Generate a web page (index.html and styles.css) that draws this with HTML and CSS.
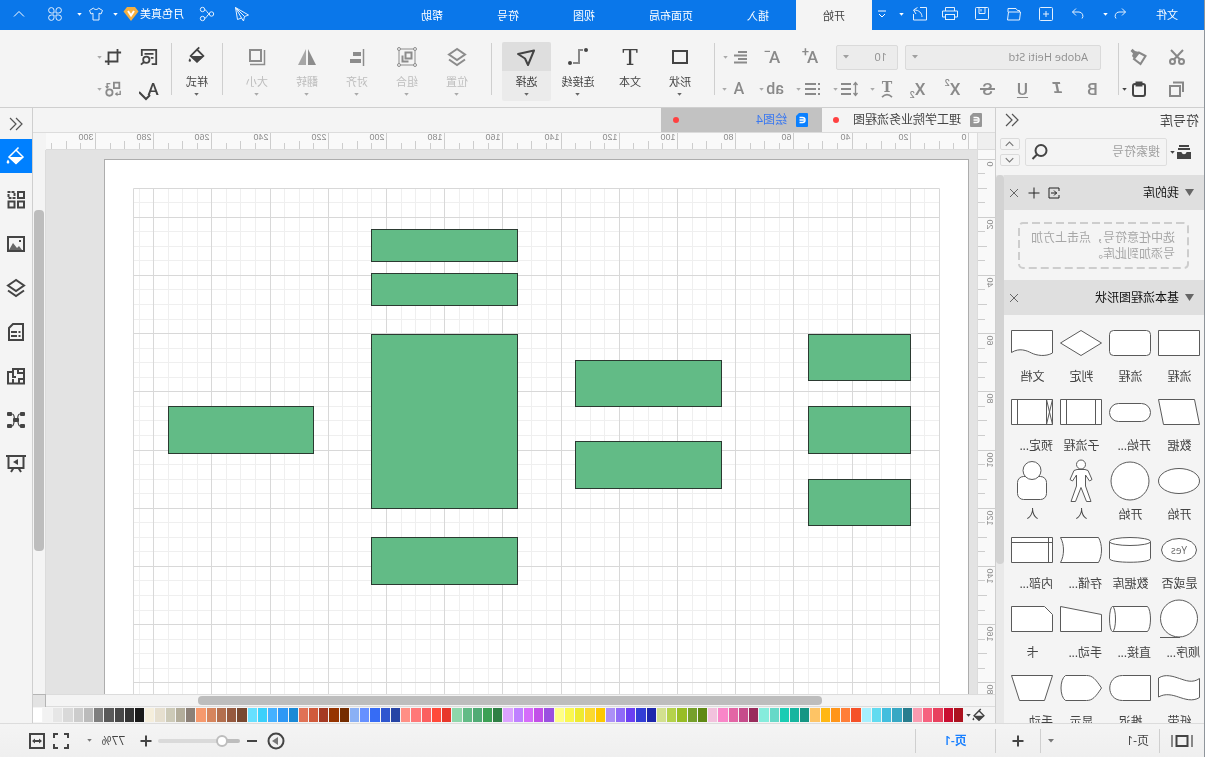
FILE: index.html
```html
<!DOCTYPE html>
<html lang="zh-CN">
<head>
<meta charset="utf-8">
<title>绘图4</title>
<link rel="stylesheet" href="styles.css">
</head>
<body>
<svg class="sprite" aria-hidden="true">
  <symbol id="caret" viewBox="0 0 6 4"><path d="M0 0h6L3 3.5z" fill="currentColor" stroke="none"/></symbol>
  <symbol id="undo" viewBox="0 0 16 16"><path d="M6 2.500 2.500 6 6 9.500M2.500 6H9a4 4 0 0 1 3 6.500"/></symbol>
  <symbol id="redo" viewBox="0 0 16 16"><path d="M10 2.500 13.500 6 10 9.500M13.500 6H7a4 4 0 0 0-3 6.500"/></symbol>
  <symbol id="new" viewBox="0 0 16 16"><rect x="1.500" y="1.500" width="13" height="13" rx="1"/><path d="M8 5v6M5 8h6"/></symbol>
  <symbol id="open" viewBox="0 0 16 16"><path d="M2.500 6V4.500h2l1.500-2h8V6M1.500 6h12l1 8h-12z"/></symbol>
  <symbol id="save" viewBox="0 0 16 16"><rect x="1.500" y="1.500" width="13" height="12" rx="1"/><path d="M5 1.500v6h6v-6M9 3v2.500"/></symbol>
  <symbol id="print" viewBox="0 0 16 16"><path d="M3.500 5V1.500h9V5M3.500 11H.5V5h15v6h-3"/><rect x="3.500" y="8.500" width="9" height="5"/></symbol>
  <symbol id="export" viewBox="0 0 16 16"><path d="M8 1.500H1.500v12.500h13V8M6 11c0-4 3-7 8-7M10.500 1.500 14.500 4l-2.500 4"/></symbol>
  <symbol id="more" viewBox="0 0 10 10"><path d="M1 2h8M2 5l3 3 3-3"/></symbol>
  <symbol id="send" viewBox="0 0 16 16"><path d="M14.500 1.500 1.500 9l4 1.500 1 4.500 2-3 4 1.500zM14.500 1.500 5.500 10.500M14.500 1.500 8.500 12"/></symbol>
  <symbol id="share" viewBox="0 0 16 16"><circle cx="3.500" cy="8" r="2.200"/><circle cx="12.500" cy="3.500" r="2.200"/><circle cx="12.500" cy="12.500" r="2.200"/><path d="M5.500 8c2 0 3-4.500 5-4.500M5.500 8c2 0 3 4.500 5 4.500"/></symbol>
  <symbol id="shirt" viewBox="0 0 16 16"><path d="M5.500 2 1.500 4.500 3 8l2-.8V14h6V7.200l2 .8 1.500-3.500-4-2.500c-.5 2-4.500 2-5 0z"/></symbol>
  <symbol id="petals" viewBox="0 0 16 16"><path d="M7 7V4.500A2.700 2.700 0 1 0 4.300 7zM9 7V4.500A2.700 2.700 0 1 1 11.700 7zM7 9v2.500A2.700 2.700 0 1 1 4.300 9zM9 9v2.500A2.700 2.700 0 1 0 11.700 9z"/></symbol>
  <symbol id="up" viewBox="0 0 12 8"><path d="m1 6.500 5-5 5 5"/></symbol>
  <symbol id="down" viewBox="0 0 12 8"><path d="m1 1.500 5 5 5-5"/></symbol>
  <symbol id="vip" viewBox="0 0 16 16"><path d="M4 1h8l3.500 4.500L8 15 .5 5.500z" fill="#f5b041" stroke="none"/><path d="m5 5 3 4.500L11 5" stroke="#fff" stroke-width="2"/></symbol>
  <symbol id="cut" viewBox="0 0 18 18"><circle cx="4.500" cy="13.500" r="2.500"/><circle cx="13.500" cy="13.500" r="2.500"/><path d="m3 2 9 9.500M15 2l-9 9.500"/></symbol>
  <symbol id="brush" viewBox="0 0 18 18"><path d="M2.500 8 9 4.500l5 6.500-6.500 5z"/><path d="m9 4 5 6.500 2-2.500-1-2.500L17.500 3l-2-2.300L13 3z" fill="currentColor" stroke="none"/></symbol>
  <symbol id="copy" viewBox="0 0 18 18"><rect x="6" y="6" width="10" height="10"/><path d="M3 12V2.500h10"/></symbol>
  <symbol id="paste" viewBox="0 0 18 18"><rect x="3" y="4" width="12" height="12" rx="2"/><path d="M6.500 2.500h5v3h-5z"/></symbol>
  <symbol id="align" viewBox="0 0 16 16"><path d="M1 3h9M1 6.500h13M1 10h9M1 13.500h13"/></symbol>
  <symbol id="arc" viewBox="0 0 16 6"><path d="M2 5c4-4 8-4 12 0"/></symbol>
  <symbol id="spacing" viewBox="0 0 18 16"><path d="M7 3h10M7 8h10M7 13h10"/><path d="M2.500 2v12M.5 4l2-2.500 2 2.500M.5 12l2 2.500 2-2.500" stroke-width="1.300"/></symbol>
  <symbol id="list" viewBox="0 0 16 16"><path d="M5 3h11M5 8h11M5 13h11M1 3h2M1 8h2M1 13h2"/></symbol>
  <symbol id="rect" viewBox="0 0 20 20"><path d="M3 4h14v12H3z"/></symbol>
  <symbol id="link" viewBox="0 0 20 20"><path d="M5 3h4v13h6" stroke="#888"/><circle cx="2" cy="3" r="2" fill="currentColor" stroke="none"/><circle cx="18" cy="16" r="2" fill="currentColor" stroke="none"/></symbol>
  <symbol id="cursor" viewBox="0 0 20 20"><path d="M2 3.500 18 7l-7 4.500L8 18z" stroke-linejoin="round"/></symbol>
  <symbol id="layers" viewBox="0 0 20 20"><path d="m10 2 8 5.500-8 5.500-8-5.500zM2 12.500l8 5.500 8-5.500"/></symbol>
  <symbol id="group" viewBox="0 0 20 20"><path d="M2 2h16v16H2z" stroke-width="1"/><path d="M5.500 5.500h6v6h-6zM8.500 14.500h6v-6"/><g fill="#f4f4f4" stroke-width="1"><circle cx="2" cy="2" r="1.500"/><circle cx="18" cy="2" r="1.500"/><circle cx="2" cy="18" r="1.500"/><circle cx="18" cy="18" r="1.500"/></g></symbol>
  <symbol id="aligned" viewBox="0 0 20 20"><path d="M3.500 2v17" stroke-width="1.500"/><path d="M6 5h8v4H6zM6 12h11v4H6z" fill="currentColor" stroke="none"/></symbol>
  <symbol id="flip" viewBox="0 0 20 20"><path d="M9 2v16H1z" fill="currentColor" stroke="none"/><path d="M11 2v16h8z" fill="currentColor" opacity=".75" stroke="none"/></symbol>
  <symbol id="size" viewBox="0 0 20 20"><path d="M6 3h11v11H6z"/><path d="M2.500 3v14.500H17" stroke-width="1.500"/></symbol>
  <symbol id="bucket" viewBox="0 0 20 20"><path d="m3 11 7-7 7 7-7 6.500zM7.500 1.500 12 6"/><path d="M2.500 11h15L10 18z" fill="currentColor" stroke="none"/><path d="M18 13.500c2 2.500 1.500 4 0 4s-2-1.500 0-4z" fill="currentColor" stroke="none"/></symbol>
  <symbol id="find" viewBox="0 0 20 20"><path d="M7 18H2V2h16v7M5 6.500h10M5 11h3"/><circle cx="13" cy="13" r="3.500"/><path d="m15.500 15.500 3.500 3"/></symbol>
  <symbol id="crop" viewBox="0 0 20 20"><path d="M1 5h14v10M5 5v10h14M15 15v4M5 5V1"/></symbol>
  <symbol id="check" viewBox="0 0 16 16"><path d="m5 10 4 4 7-7"/></symbol>
  <symbol id="swap" viewBox="0 0 20 20"><path d="M3 3h6v6H3z"/><circle cx="14" cy="14" r="3.500"/><path d="M13 4h3.500v4M2 12v4h5" stroke-width="1.500"/><path d="M14 7h5l-2.500 3zM5 13v5l3-2.500z" fill="currentColor" stroke="none"/></symbol>
  <symbol id="dbl" viewBox="0 0 14 14"><path d="M7 1 1 7l6 6M13 1 7 7l6 6"/></symbol>
  <symbol id="drawer" viewBox="0 0 18 18"><path d="M4 3h10M3 6h12"/><path d="M2 9h4.500c.5 3 4.500 3 5 0H16v7H2z" fill="currentColor" stroke="none"/></symbol>
  <symbol id="search" viewBox="0 0 18 18"><circle cx="8" cy="7.500" r="5.500"/><path d="m12 11.500 4.500 4.500"/></symbol>
  <symbol id="tri" viewBox="0 0 10 8"><path d="M0 0h9L4.500 7z" fill="currentColor" stroke="none"/></symbol>
  <symbol id="import" viewBox="0 0 12 12"><path d="M1 4V1h10v10H1V8M9 6H3M6 3.500 3.500 6 6 8.500"/></symbol>
  <symbol id="plus" viewBox="0 0 12 12"><path d="M6 .5v11M.5 6h11"/></symbol>
  <symbol id="minus" viewBox="0 0 12 12"><path d="M1 6h10"/></symbol>
  <symbol id="close" viewBox="0 0 12 12"><path d="m2 2 8 8M10 2l-8 8"/></symbol>
  <symbol id="doc" viewBox="0 0 12 14"><path d="M1 0h8l3 3v10a1 1 0 0 1-1 1H1a1 1 0 0 1-1-1V1a1 1 0 0 1 1-1z" fill="currentColor" stroke="none"/><path d="M8.500 4.500H5.500a2.500 2.500 0 0 0 0 5h3M4 7h4.500" stroke="#fff" stroke-width="1.400"/></symbol>
  <symbol id="tiles" viewBox="0 0 20 20"><path d="M2 2h6v6H2zM2 11.500h6v6H2zM11.500 11.500h6v6h-6z"/><path d="M11.500 2h6v6h-6z" stroke-dasharray="3 1"/></symbol>
  <symbol id="image" viewBox="0 0 20 20"><path d="M2 3h16v14H2z"/><path d="m4 16 3-4 2 2 4-5 4 7z" fill="currentColor" opacity=".8" stroke="none"/><path d="M5 6h2v2H5z" fill="currentColor" stroke="none"/></symbol>
  <symbol id="note" viewBox="0 0 20 20"><path d="M3 2h10l4 4v12H3zM9 10h6M9 14h6M5.500 10h2M5.500 14h2"/></symbol>
  <symbol id="plan" viewBox="0 0 20 20"><path d="M2 17.500V3h11v3h5v11.500zM8 3v4H2M2 13h5v4M13 6v5h-3M13 17v-4"/></symbol>
  <symbol id="net" viewBox="0 0 20 20"><g fill="currentColor" stroke="none"><rect x="1" y="2" width="5" height="4" rx="1"/><rect x="14" y="2" width="5" height="4" rx="1"/><rect x="1" y="14" width="5" height="4" rx="1"/><rect x="14" y="14" width="5" height="4" rx="1"/><rect x="7" y="8" width="6" height="4" rx="1"/></g><path d="M6 4c4 0 2 12 0 12M14 4c-4 0-2 12 0 12" stroke-width="1.200"/></symbol>
  <symbol id="board" viewBox="0 0 20 20"><path d="M0 2h20M2.500 2v12h15V2M7.500 14 5 18M12.500 14l2.500 4"/><path d="M8 5v6l5-3z" fill="currentColor" stroke="none"/></symbol>
  <symbol id="pageview" viewBox="0 0 22 14"><path d="M5.500 2h11v10h-11z"/><path d="M1 1v12M21 1v12" stroke="#888"/></symbol>
  <symbol id="play" viewBox="0 0 18 18"><circle cx="9" cy="9" r="7.500"/><path d="M7 5v8l6-4z" fill="#777" stroke="none"/></symbol>
  <symbol id="full" viewBox="0 0 16 16"><path d="M1 5V1h4M11 1h4v4M15 11v4h-4M5 15H1v-4"/></symbol>
  <symbol id="fit" viewBox="0 0 16 16"><path d="M1 1h14v14H1zM4 8h8"/><path d="m3 8 3-2.500v5zM13 8l-3-2.500v5z" fill="currentColor" stroke="none"/></symbol>
</svg>

<div class="app">
  <header class="titlebar">
    <button class="file">文件</button>
    <div class="quick">
      <button class="q-undo" aria-label="撤销"><svg class="i16"><use href="#undo"/></svg></button>
      <button class="q-caret" aria-label="撤销列表"><svg class="caret"><use href="#caret"/></svg></button>
      <button class="q-redo" aria-label="重做"><svg class="i16"><use href="#redo"/></svg></button>
      <button class="q-btn" aria-label="新建"><svg class="i16"><use href="#new"/></svg></button>
      <button class="q-btn" aria-label="打开"><svg class="i16"><use href="#open"/></svg></button>
      <button class="q-btn" aria-label="保存"><svg class="i16"><use href="#save"/></svg></button>
      <button class="q-btn" aria-label="打印"><svg class="i16"><use href="#print"/></svg></button>
      <button class="q-export" aria-label="导出"><svg class="i16"><use href="#export"/></svg></button>
      <button class="q-caret" aria-label="导出选项"><svg class="caret"><use href="#caret"/></svg></button>
      <button class="q-more" aria-label="更多"><svg class="i10"><use href="#more"/></svg></button>
    </div>
    <nav class="menu">
      <button class="menu-tab active">开始</button>
      <button class="menu-tab">插入</button>
      <button class="menu-tab">页面布局</button>
      <button class="menu-tab">视图</button>
      <button class="menu-tab">符号</button>
      <button class="menu-tab">帮助</button>
    </nav>
    <div class="account">
      <button class="q-btn" aria-label="发送"><svg class="i16"><use href="#send"/></svg></button>
      <button class="a-share" aria-label="分享"><svg class="i16"><use href="#share"/></svg></button>
      <button class="user">月色真美<svg class="i16"><use href="#vip"/></svg><svg class="caret"><use href="#caret"/></svg></button>
      <button class="theme" aria-label="主题"><svg class="i16"><use href="#shirt"/></svg><svg class="caret"><use href="#caret"/></svg></button>
      <button class="a-apps" aria-label="应用"><svg class="i16"><use href="#petals"/></svg></button>
      <button class="a-fold" aria-label="折叠"><svg class="i12"><use href="#up"/></svg></button>
    </div>
  </header>

  <div class="ribbon">
    <div class="g-clip">
      <div class="row"><button class="cell dim" aria-label="剪切"><svg class="i18"><use href="#cut"/></svg></button><button class="cell start dim" aria-label="格式刷"><svg class="i18"><use href="#brush"/></svg></button></div>
      <div class="row"><button class="cell dim" aria-label="复制"><svg class="i18"><use href="#copy"/></svg></button><button class="cell start" aria-label="粘贴"><svg class="i18"><use href="#paste"/></svg><svg class="caret"><use href="#caret"/></svg></button></div>
    </div>
    <span class="rule"></span>
    <div class="g-font">
      <div class="row fonts">
        <label class="combo family"><select aria-label="字体" disabled><option>Adobe Heiti Std</option></select><svg class="caret"><use href="#caret"/></svg></label>
        <label class="combo points"><select aria-label="字号" disabled><option>10</option></select><svg class="caret"><use href="#caret"/></svg></label>
        <button class="glyph wide" aria-label="增大字号">A<sup>+</sup></button>
        <button class="glyph wide" aria-label="减小字号">A<sup>−</sup></button>
        <button class="split" aria-label="对齐"><svg class="i16"><use href="#align"/></svg><svg class="caret"><use href="#caret"/></svg></button>
      </div>
      <div class="row styles">
        <button class="glyph">B</button>
        <button class="glyph italic">I</button>
        <button class="glyph underline">U</button>
        <button class="glyph strike">S</button>
        <button class="glyph">X<sup>2</sup></button>
        <button class="glyph">X<sub>2</sub></button>
        <button class="split" aria-label="文字弯曲"><span class="bent">T<svg><use href="#arc"/></svg></span><svg class="caret"><use href="#caret"/></svg></button>
        <button class="split" aria-label="行距"><svg class="i18"><use href="#spacing"/></svg><svg class="caret"><use href="#caret"/></svg></button>
        <button class="split" aria-label="列表"><svg class="i16"><use href="#list"/></svg><svg class="caret"><use href="#caret"/></svg></button>
        <button class="split" aria-label="高亮"><span class="letter">ab</span><svg class="caret"><use href="#caret"/></svg></button>
        <button class="split" aria-label="字体颜色"><span class="letter">A</span><svg class="caret"><use href="#caret"/></svg></button>
      </div>
    </div>
    <span class="rule"></span>
    <div class="g-tools">
      <button class="big"><span class="pic"><svg class="i20"><use href="#rect"/></svg></span>形状<svg class="caret"><use href="#caret"/></svg></button>
      <button class="big"><span class="pic slab">T</span>文本</button>
      <button class="big linker"><span class="pic"><svg class="i20"><use href="#link"/></svg></span>连接线<svg class="caret"><use href="#caret"/></svg></button>
      <button class="big on"><span class="pic"><svg class="i20"><use href="#cursor"/></svg></span>选择<svg class="caret"><use href="#caret"/></svg></button>
    </div>
    <span class="rule"></span>
    <div class="g-arrange">
      <button class="big off" disabled><span class="pic"><svg class="i20"><use href="#layers"/></svg></span>位置<svg class="caret"><use href="#caret"/></svg></button>
      <button class="big off" disabled><span class="pic"><svg class="i20"><use href="#group"/></svg></span>组合<svg class="caret"><use href="#caret"/></svg></button>
      <button class="big off" disabled><span class="pic"><svg class="i20"><use href="#aligned"/></svg></span>对齐<svg class="caret"><use href="#caret"/></svg></button>
      <button class="big off" disabled><span class="pic"><svg class="i20"><use href="#flip"/></svg></span>翻转<svg class="caret"><use href="#caret"/></svg></button>
      <button class="big off" disabled><span class="pic"><svg class="i20"><use href="#size"/></svg></span>大小<svg class="caret"><use href="#caret"/></svg></button>
    </div>
    <span class="rule"></span>
    <button class="big top"><span class="pic"><svg class="i18"><use href="#bucket"/></svg></span>样式<svg class="caret"><use href="#caret"/></svg></button>
    <span class="rule"></span>
    <div class="g-edit">
      <div class="row"><button class="edit" aria-label="查找"><svg class="i18"><use href="#find"/></svg></button><button class="split dark" aria-label="裁剪"><svg class="i18"><use href="#crop"/></svg><svg class="caret"><use href="#caret"/></svg></button></div>
      <div class="row"><button class="edit spell" aria-label="拼写检查">A<svg class="i16"><use href="#check"/></svg></button><button class="split" aria-label="替换"><svg class="i18"><use href="#swap"/></svg><svg class="caret"><use href="#caret"/></svg></button></div>
    </div>
  </div>

  <main class="main">
    <aside class="library">
      <div class="lib-head"><h2>符号库</h2><button aria-label="收起"><svg class="i14"><use href="#dbl"/></svg></button></div>
      <div class="lib-search">
        <button class="drawer" aria-label="图库"><svg class="i18"><use href="#drawer"/></svg><svg class="caret"><use href="#caret"/></svg></button>
        <label class="lookup"><input type="text" placeholder="搜索符号" aria-label="搜索符号"><svg class="i18"><use href="#search"/></svg></label>
        <div class="spin"><button aria-label="上一个"><svg><use href="#up"/></svg></button><button aria-label="下一个"><svg><use href="#down"/></svg></button></div>
      </div>
      <div class="lib-scroll">
        <div class="lib-list">
          <div class="sec"><svg class="tri"><use href="#tri"/></svg><h3>我的库</h3><button class="strong" aria-label="导入"><svg class="i12"><use href="#import"/></svg></button><button class="strong" aria-label="添加"><svg class="i12"><use href="#plus"/></svg></button><button aria-label="关闭"><svg class="i12"><use href="#close"/></svg></button></div>
          <div class="drop">
            <svg class="dash"><rect x="1" y="1" rx="4"/></svg>
            <p>选中任意符号，点击上方加号添加到此库。</p>
          </div>
          <div class="sec"><svg class="tri"><use href="#tri"/></svg><h3>基本流程图形状</h3><button aria-label="关闭"><svg class="i12"><use href="#close"/></svg></button></div>
          <div class="shapes">
            <figure><svg><path d="M1.500 9.500h41v25h-41z"/></svg><figcaption>流程</figcaption></figure>
            <figure><svg><rect x="1.500" y="9.500" width="41" height="25" rx="4"/></svg><figcaption>流程</figcaption></figure>
            <figure><svg><path d="M22 9.500 42.500 22 22 34.500 1.500 22z"/></svg><figcaption>判定</figcaption></figure>
            <figure><svg><path d="M1.500 9.500h41v22c-8-5-15-2-20 0.500s-14 4-21 0z"/></svg><figcaption>文档</figcaption></figure>

            <figure><svg><path d="M6.500 9.500h36l-5 25h-36z"/></svg><figcaption>数据</figcaption></figure>
            <figure><svg><rect x="1.500" y="13.500" width="41" height="18" rx="9"/></svg><figcaption class="cut">开始...</figcaption></figure>
            <figure><svg><path d="M1.500 9.500h41v25h-41zM7.500 9.500v25M36.500 9.500v25"/></svg><figcaption>子流程</figcaption></figure>
            <figure><svg><path d="M1.500 9.500h41v25h-41zM7.500 9.500v25M36.500 9.500v25M1.500 9.500l6 25M7.500 9.500l-6 25"/></svg><figcaption class="cut">预定...</figcaption></figure>

            <figure><svg><ellipse cx="22" cy="22" rx="20.500" ry="12.500"/></svg><figcaption>开始</figcaption></figure>
            <figure><svg><circle cx="22" cy="22" r="19"/></svg><figcaption>开始</figcaption></figure>
            <figure><svg><path d="M18 10.500h8l3 1 4 9-2.500 1.500-4-6v11l5.500 15.500h-4.500L22 28.500l-5.500 14H12L17.500 27V16l-4 6-2.500-1.500 4-9z"/><circle cx="22" cy="5.500" r="4.500"/></svg><figcaption>人</figcaption></figure>
            <figure><svg><rect x="7.500" y="17.500" width="29" height="23" rx="6"/><circle cx="22" cy="11.500" r="9"/></svg><figcaption>人</figcaption></figure>

            <figure><svg><ellipse cx="22" cy="22" rx="17.500" ry="11.500"/><text x="22" y="26">Yes</text></svg><figcaption>是或否</figcaption></figure>
            <figure><svg><path d="M1.500 13.500v17c0 5 41 5 41 0v-17"/><ellipse cx="22" cy="13.500" rx="20.500" ry="4"/></svg><figcaption>数据库</figcaption></figure>
            <figure><svg><path d="M4.500 9.500h38c-4 7-4 18 0 25h-38c-4-7-4-18 0-25z"/></svg><figcaption class="cut">存储...</figcaption></figure>
            <figure><svg><path d="M1.500 9.500h41v25h-41zM1.500 14.500h41M5.500 9.500v25"/></svg><figcaption class="cut">内部...</figcaption></figure>

            <figure><svg><circle cx="22" cy="21.500" r="18.500"/><path d="M21 40.500h20"/></svg><figcaption class="cut">顺序...</figcaption></figure>
            <figure><svg><path d="M39.500 9.500h-35c-4 4-4 21 0 25h35"/><ellipse cx="39.500" cy="22" rx="3" ry="12.500"/></svg><figcaption class="cut">直接...</figcaption></figure>
            <figure><svg><path d="M42.500 9.500v25h-41v-17z"/></svg><figcaption class="cut">手动...</figcaption></figure>
            <figure><svg><path d="M9.500 9.500h33v25h-41v-17z"/></svg><figcaption>卡</figcaption></figure>

            <figure><svg><path d="M1.500 12.500c7 5 14 2 20 0s14-5 21-.5v19c-7-4-14-2-20 0s-14 5-21 .5z"/></svg><figcaption>纸带</figcaption></figure>
            <figure><svg><path d="M1.500 9.500h28c17 0 17 25 0 25h-28z"/></svg><figcaption>推迟</figcaption></figure>
            <figure><svg><path d="M1.500 22c6-9 9-12.500 15-12.500h21c6 4 6 21 0 25h-21c-6 0-9-3.500-15-12.500z"/></svg><figcaption>显示</figcaption></figure>
            <figure><svg><path d="M1.500 9.500h41l-8 25h-25z"/></svg><figcaption class="cut">手动...</figcaption></figure>
          </div>
        </div>
        <div class="lib-bar"><span></span></div>
      </div>
    </aside>

    <section class="workspace">
      <div class="docs">
        <button class="doc"><svg class="file-icon"><use href="#doc"/></svg>理工学院业务流程图<i class="dot"></i></button>
        <button class="doc current"><svg class="file-icon"><use href="#doc"/></svg>绘图4<i class="dot"></i></button>
      </div>
      <div class="stage">
        <div class="corner"></div>
        <svg class="ruler-x" id="rulerX"></svg>
        <div class="blank"></div>
        <svg class="ruler-y" id="rulerY"></svg>
        <svg class="canvas">
          <rect class="page" x="8.500" y="9.500" width="864" height="611"/>
          <g id="grid"></g>
          <g class="nodes">
            <rect x="66.500" y="184.500" width="102" height="46"/>
            <rect x="66.500" y="256.500" width="102" height="47"/>
            <rect x="66.500" y="329.500" width="102" height="46"/>
            <rect x="255.500" y="210.500" width="146" height="46"/>
            <rect x="255.500" y="291.500" width="146" height="47"/>
            <rect x="459.500" y="79.500" width="146" height="32"/>
            <rect x="459.500" y="123.500" width="146" height="32"/>
            <rect x="459.500" y="184.500" width="146" height="174"/>
            <rect x="459.500" y="387.500" width="146" height="47"/>
            <rect x="663.500" y="256.500" width="145" height="47"/>
          </g>
        </svg>
        <div class="vbar"><span></span></div>
        <div class="hbar"><span></span></div>
        <div class="nook"></div>
      </div>
      <div class="palette">
        <button class="fill" aria-label="填充"><svg class="i14"><use href="#bucket"/></svg><svg class="caret"><use href="#caret"/></svg></button>
        <div class="swatches" id="swatches"></div>
      </div>
    </section>

    <aside class="dock">
      <button class="dock-head" aria-label="展开"><svg class="i14"><use href="#dbl"/></svg></button>
      <button class="active" aria-label="填充"><svg class="i20"><use href="#bucket"/></svg></button>
      <button aria-label="布局"><svg class="i20"><use href="#tiles"/></svg></button>
      <button aria-label="图片"><svg class="i20"><use href="#image"/></svg></button>
      <button aria-label="图层"><svg class="i20"><use href="#layers"/></svg></button>
      <button aria-label="备注"><svg class="i20"><use href="#note"/></svg></button>
      <button aria-label="平面图"><svg class="i20"><use href="#plan"/></svg></button>
      <button aria-label="关系"><svg class="i20"><use href="#net"/></svg></button>
      <button aria-label="演示"><svg class="i20"><use href="#board"/></svg></button>
    </aside>
  </main>

  <footer class="status">
    <button class="view" aria-label="页面视图"><svg><use href="#pageview"/></svg></button>
    <span class="bar"></span>
    <label class="pages"><select aria-label="页面"><option>页-1</option></select><svg class="caret"><use href="#caret"/></svg></label>
    <span class="bar"></span>
    <button class="add" aria-label="添加页面"><svg class="i12"><use href="#plus"/></svg></button>
    <span class="bar"></span>
    <button class="page-tab">页-1</button>
    <span class="bar"></span>
    <div class="zoom">
      <button aria-label="播放"><svg class="i18"><use href="#play"/></svg></button>
      <button aria-label="缩小"><svg class="i12"><use href="#minus"/></svg></button>
      <input type="range" min="0" max="100" value="17" aria-label="缩放">
      <button aria-label="放大"><svg class="i12"><use href="#plus"/></svg></button>
      <button class="percent">77%<svg class="caret"><use href="#caret"/></svg></button>
      <button aria-label="全屏"><svg class="i16"><use href="#full"/></svg></button>
      <button aria-label="适合宽度"><svg class="i16"><use href="#fit"/></svg></button>
    </div>
  </footer>
</div>
<script src="app.js"></script>
</body>
</html>
```

FILE: styles.css
```css
* { box-sizing: border-box; }
html { height: 100%; }
body {
  margin: 0;
  height: 100%;
  overflow: hidden;
  font: 12px/16px "Open Sans", "Noto Sans CJK SC", sans-serif;
  color: #444;
  background: #f4f4f4;
}
button, input, select { font: inherit; color: inherit; }
button { border: 0; padding: 0; background: none; display: flex; align-items: center; justify-content: center; }
select { appearance: none; border: 0; background: none; opacity: 1; }
svg { fill: none; stroke: currentColor; stroke-width: 2; flex: none; display: block; }
h2, h3, p, figure { margin: 0; font-weight: 400; }
.sprite { position: absolute; width: 0; height: 0; }
.i10 { width: 10px; height: 10px; }
.i12 { width: 12px; height: 12px; }
.i14 { width: 14px; height: 14px; }
.i16 { width: 16px; height: 16px; }
.i18 { width: 18px; height: 18px; }
.i20 { width: 20px; height: 20px; }
.caret { width: 5px; height: 3px; }

/* The whole workspace is shown right-to-left, as seen in a mirror */
.app {
  height: 100%;
  display: flex;
  flex-direction: column;
  border-left: 1px solid #8f959b;
  transform: scaleX(-1);
}

/* Title bar */
.titlebar { flex: none; display: flex; height: 30px; background: #0a77ea; color: #fff; font-size: 11px; }
.titlebar svg { stroke-width: 1; }
.titlebar .i16 { color: #e4f0fd; }
.file { width: 74px; }
.quick, .menu, .account { display: flex; }
.quick button, .account button { height: 28px; }
.q-undo { width: 20px; }
.q-caret { width: 8px; }
.q-redo { width: 32px; margin-left: 8px; }
.q-btn { width: 32px; }
.q-export { width: 28px; }
.q-more { width: 21px; margin-left: 5px; }
.menu-tab { padding: 2px 27px 0; }
.menu-tab.active { background: #f4f4f4; color: #444; }
.account { margin-left: auto; }
.a-share { width: 38px; }
.user { gap: 5px; width: 79px; }
.user .i16 { margin-left: -4px; }
.theme { width: 36px; gap: 6px; }
.a-apps { width: 35px; }
.a-fold { width: 38px; }
.a-fold svg { height: 8px; }

/* Ribbon */
.ribbon { flex: none; display: flex; height: 78px; border-bottom: 1px solid #cfcfcf; background: #f4f4f4; }
.rule { flex: none; width: 1px; height: 52px; margin-top: 13px; background: #cfcfcf; }
.row { display: flex; align-items: center; height: 32px; }
.g-clip, .g-font, .g-edit { flex: none; padding-top: 11px; }
.g-clip { width: 85px; padding-left: 8px; }
.cell { width: 38px; height: 32px; }
.cell.start { justify-content: flex-start; padding-left: 10px; gap: 3px; }
.dim { color: #888; }
.g-font { width: 403px; color: #8a8a8a; }
.fonts { padding-left: 17px; }
.styles { padding-left: 8px; }
.combo {
  display: flex; align-items: center; height: 25px; margin-right: 7px; padding-right: 6px;
  border: 1px solid #dadada; border-radius: 2px; background: #ececec; font-size: 11px; color: #8f8f8f;
}
.combo select { flex: 1; min-width: 0; padding: 0 0 0 12px; }
.combo .caret { width: 6px; height: 4px; color: #a0a0a0; }
.family { width: 196px; }
.points { width: 62px; }
.points select { padding-left: 10px; }
.glyph { position: relative; width: 35px; height: 32px; font: 500 17px/20px Roboto, sans-serif; }
.glyph sup, .glyph sub { font-size: 9px; line-height: 9px; }
.glyph sup { align-self: flex-start; margin-top: 6px; }
.glyph sub { align-self: flex-end; margin-bottom: 5px; }
.glyph.wide { width: 38px; }
.glyph.wide sup { font-size: 13px; margin-left: -2px; }
.italic { font: italic 700 17px/20px "Liberation Mono", monospace; }
.underline { text-decoration: underline; text-underline-offset: 2px; }
.strike::after { content: ""; position: absolute; left: 10px; right: 10px; top: 15px; height: 2px; background: #8a8a8a; }
.split { flex: none; width: 37px; height: 32px; padding-left: 5px; justify-content: flex-start; gap: 4px; color: #8a8a8a; }
.split .caret { color: #aaa; }
.split .i18 + .caret { margin-left: -2px; }
.letter { width: 16px; font: 500 16px/20px Roboto, sans-serif; text-align: center; }
.bent { width: 16px; font: 700 14px/12px "DejaVu Serif", serif; text-align: center; }
.bent svg { width: 16px; height: 5px; }
.g-tools, .g-arrange { display: flex; flex: none; padding-top: 12px; }
.g-tools { padding-left: 9px; padding-right: 10px; }
.g-arrange { padding: 12px 9px 0; }
.big { flex: none; flex-direction: column; justify-content: flex-start; width: 50px; height: 59px; font-size: 11px; color: #444; border-radius: 2px; overflow: hidden; }
.pic { display: flex; align-items: center; justify-content: center; width: 100%; height: 29px; margin-bottom: 3px; }
.pic svg { stroke-width: 2; }
.pic.slab { font: 23px/28px "DejaVu Serif", serif; }
.big .caret { margin-top: 3px; color: #666; }
.big.linker { width: 54px; }
.big.on { width: 49px; background: #ebebeb; }
.big.on .pic { background: #dedede; }
.big.off { color: #bdbdbd; }
.big.off .pic { color: #8c8c8c; }
.big.off .caret { color: #aaa; }
.big.top { margin-top: 10px; height: 61px; }
.big.top .pic { margin-bottom: 5px; }
.edit { width: 44px; height: 32px; }
.split.dark { color: #444; }
.spell { font: 500 17px/20px Roboto, sans-serif; }
.spell svg { margin-left: -8px; margin-top: 8px; }

/* Main area */
.main { flex: 1; min-height: 0; display: flex; }
.library { flex: none; width: 209px; border-right: 1px solid #cfcfcf; display: flex; flex-direction: column; }
.lib-head { display: flex; align-items: center; justify-content: space-between; padding: 0 9px 0 5px; height: 24px; }
.lib-head h2 { font-size: 13px; }
.lib-head svg, .dock-head svg { stroke-width: 1.2; color: #555; }
.lib-search { display: flex; align-items: center; height: 43px; padding: 0 4px 3px 11px; }
.drawer { flex: none; gap: 0; width: 26px; justify-content: flex-start; }
.lookup { display: flex; align-items: center; flex: 1; min-width: 0; height: 28px; padding: 0 5px; border: 1px solid #dedede; border-radius: 2px; }
.lookup input { flex: 1; min-width: 0; border: 0; padding: 0 0 0 1px; background: none; outline: 0; }
.lookup input::placeholder { color: #a0a0a0; }
.spin { display: flex; flex-direction: column; gap: 4px; margin-left: 5px; }
.spin button { width: 20px; height: 12px; border: 1px solid #dadada; border-radius: 2px; }
.spin svg { width: 9px; height: 6px; stroke-width: 1.5; color: #777; }
.lib-scroll { flex: 1; min-height: 0; display: flex; }
.lib-list { flex: 1; min-width: 0; overflow: hidden; }
.lib-bar { width: 8px; background: #e9e9e9; }
.lib-bar span { display: block; height: 71%; border-radius: 4px; background: #d3d3d3; }
.sec { display: flex; align-items: center; gap: 8px; height: 35px; padding: 0 4px 0 10px; background: #dfdfdf; }
.sec h3 { flex: 1; margin-left: -3px; color: #111; font-size: 12px; }
.sec svg { stroke-width: 1; color: #666; }
.sec .tri { width: 10px; height: 8px; }
.sec .strong svg { color: #222; }
.drop { position: relative; height: 70px; padding: 20px 25px 0 29px; color: #a6a6a6; }
.dash { position: absolute; left: 15px; top: 12px; width: 171px; height: 47px; }
.dash rect { width: 169px; height: 45px; stroke: #cdcdcd; stroke-width: 2; stroke-dasharray: 8 4; }
.shapes { display: grid; grid-template-columns: repeat(4, 49px); }
.shapes figure { height: 69px; padding-top: 6px; }
.shapes svg { width: 44px; height: 44px; margin: 0 auto 4px; stroke: #5a5a5a; stroke-width: 1; fill: #fff; }
.shapes text { font-size: 10px; text-anchor: middle; fill: #666; stroke: none; }
.shapes figcaption { text-align: center; white-space: nowrap; }
.shapes .cut { text-align: left; padding-left: 4px; }

.workspace { flex: 1; min-width: 0; display: flex; flex-direction: column; }
.docs { flex: none; display: flex; height: 25px; border-bottom: 1px solid #dcdcdc; }
.doc { gap: 9px; width: 173px; padding: 0 11px 0 13px; justify-content: flex-start; }
.doc .dot { margin-left: auto; width: 6px; height: 6px; border-radius: 50%; background: #ff4141; }
.doc.current { width: 161px; background: #c2c2c2; color: #3a78f0; padding-left: 14px; padding-right: 12px; }
.file-icon { width: 12px; height: 14px; color: #969696; }
.current .file-icon { color: #0a80ff; }
.stage { flex: 1; min-height: 0; display: grid; grid-template: 17px minmax(0, 1fr) 13px / 18px minmax(0, 1fr) 13px; }
.corner { background: #efefef; border-right: 1px solid #dcdcdc; border-bottom: 1px solid #dcdcdc; }
.ruler-x { width: 100%; height: 17px; background: #f9f9f9; border-bottom: 1px solid #dcdcdc; overflow: hidden; }
.ruler-y { width: 18px; height: 100%; background: #f9f9f9; border-right: 1px solid #dcdcdc; overflow: hidden; }
.ruler-x, .ruler-y { stroke: #cdcdcd; stroke-width: 1; }
.stage text { font: 9px "Liberation Sans", sans-serif; fill: #8c8c8c; stroke: none; }
.canvas { width: 100%; height: 100%; background: #e3e3e3; overflow: hidden; stroke-width: 1; }
.page { fill: #fff; stroke: #adadad; }
.minor { stroke: #efefef; }
.major { stroke: #d8d8d8; }
.nodes { fill: #62bb86; stroke: #2b3a31; }
.vbar { border-left: 1px solid #dcdcdc; padding: 60px 1px 0; }
.vbar span { display: block; height: 341px; border-radius: 4px; background: #bdbdbd; }
.hbar { grid-column: 1 / 3; border-top: 1px solid #dcdcdc; border-bottom: 1px solid #dcdcdc; padding: 1px 152px 1px 173px; }
.hbar span { display: block; height: 9px; border-radius: 4px; background: #bdbdbd; }
.nook { background: #e3e3e3; border: 1px solid #b4b4b4; border-width: 1px 0 0 1px; }
.palette { flex: none; display: flex; height: 16px; padding: 1px 0; }
.fill { width: 32px; padding-left: 5px; gap: 1px; }
.swatches { flex: 1; display: flex; gap: 1px; height: 14px; }
.swatches i { flex: 1; }

.dock { flex: none; display: flex; flex-direction: column; gap: 10px; width: 33px; border-left: 1px solid #cfcfcf; }
.dock button { flex: none; height: 34px; }
.dock .dock-head { height: 31px; margin-bottom: -10px; }
.dock .active { background: #0080ff; color: #fff; }
.dock .active svg { stroke-width: 1.5; }

/* Status bar */
.status { flex: none; display: flex; align-items: center; height: 34px; border-top: 1px solid #dcdcdc; background: linear-gradient(#f4f4f4, #efefef); }
.bar { width: 1px; height: 24px; background: #cfcfcf; }
.view { width: 44px; }
.view svg { width: 22px; height: 14px; }
.pages { display: flex; align-items: center; width: 118px; padding: 0 7px 0 10px; }
.pages select { flex: 1; padding: 0; }
.pages .caret { color: #777; width: 6px; height: 4px; }
.add { width: 44px; }
.page-tab { width: 79px; color: #1a80ff; font-weight: 600; }
.zoom { display: flex; align-items: center; margin-left: auto; padding-right: 25px; }
.zoom button { width: 24px; height: 24px; }
.zoom .percent { width: 56px; gap: 10px; margin-right: 5px; }
.percent .caret { color: #777; }
.zoom input { appearance: none; width: 82px; height: 4px; margin: 0; border-radius: 2px; background: linear-gradient(to right, #bdbdbd 20%, #dadada 20%); }
.zoom input::-webkit-slider-thumb { appearance: none; width: 12px; height: 12px; border-radius: 50%; border: 2px solid #bdbdbd; background: #fff; }
```

FILE: app.js
```javascript
const NS = "http://www.w3.org/2000/svg";
const PX_PER_MM = 2.91;
const ORIGIN = 9;

function line(parent, x1, y1, x2, y2, cls) {
  const el = document.createElementNS(NS, "line");
  el.setAttribute("x1", x1);
  el.setAttribute("y1", y1);
  el.setAttribute("x2", x2);
  el.setAttribute("y2", y2);
  if (cls) el.setAttribute("class", cls);
  parent.append(el);
}

function label(parent, text, attrs) {
  const el = document.createElementNS(NS, "text");
  for (const key in attrs) el.setAttribute(key, attrs[key]);
  el.textContent = text;
  parent.append(el);
}

const atX = mm => Math.round(ORIGIN + mm * PX_PER_MM) - 0.5;
const atY = mm => Math.floor(ORIGIN + mm * PX_PER_MM) + 0.5;

const rulerX = document.getElementById("rulerX");
for (let mm = 0; mm <= 315; mm += 5) {
  const x = atX(mm);
  line(rulerX, x, mm % 20 === 0 ? 0 : mm % 10 === 0 ? 8 : 10, x, 17);
  if (mm % 20 === 0) label(rulerX, mm, { x: x + 2, y: 7 });
}

const rulerY = document.getElementById("rulerY");
for (let mm = 0; mm <= 190; mm += 5) {
  const y = atY(mm);
  line(rulerY, mm % 20 === 0 ? 0 : mm % 10 === 0 ? 8 : 10, y, 18, y);
  if (mm % 20 === 0) label(rulerY, mm, { transform: `translate(8 ${y + 2}) rotate(-90)`, "text-anchor": "end" });
}

const grid = document.getElementById("grid");
const box = { left: 37.5, top: 38.5, right: 843.5, bottom: 592.5 };
for (const kind of ["minor", "major"]) {
  for (let mm = 10; mm < 290; mm += 5) {
    if ((mm % 20 === 0) !== (kind === "major")) continue;
    const x = atX(mm);
    const y = atY(mm);
    if (x > box.left && x < box.right) line(grid, x, box.top, x, box.bottom, kind);
    if (y > box.top && y < box.bottom) line(grid, box.left, y, box.right, y, kind);
  }
}
line(grid, box.left, box.top, box.right, box.top, "major");
line(grid, box.left, box.top, box.left, box.bottom, "major");
line(grid, box.right, box.top, box.right, box.bottom, "major");

const colors = (
  "ac121f c90e31 e8415e f6627f f99bb0 287d8e 38a8c4 42bede 62dbf0 a6effd " +
  "f55128 ff7e38 ff951a ffb714 fec465 159684 17b59f 1accb3 66d9c8 85ecdc " +
  "992c5c c64c8b e365a5 f986c8 f2c2dd 608914 76a02b 98bd25 b5d24b d3e08f " +
  "1e27ac 333ed6 6b40f2 906bf8 ac90f7 fdc800 fbd92f eeea30 faf750 ffff85 " +
  "9b50e0 c250e8 d56cfa bf80ff dba3ff 2f8045 3ca055 50ab75 62bb86 8fd6aa " +
  "e8382b ff4a3a fb5f5f ff7878 ff8f85 2744a5 2f56cf 366cf5 6690ff 8ab0f5 " +
  "752d00 963400 a53a23 d05a3b e07256 1a8ad6 2e98f5 45b1ff 3bd0fb 66e0ff " +
  "784931 965a3f b36f4e d6855d f6996d 8c8077 b3ad9b cdcab8 e6dfcf f5eedc " +
  "1a1a1a 333333 474747 595959 7f7f7f bbbbbb cccccc d9d9d9 e6e6e6 f2f2f2 ffffff"
).split(" ");
const swatches = document.getElementById("swatches");
for (const c of colors) {
  const chip = document.createElement("i");
  chip.style.background = "#" + c;
  swatches.append(chip);
}
```
